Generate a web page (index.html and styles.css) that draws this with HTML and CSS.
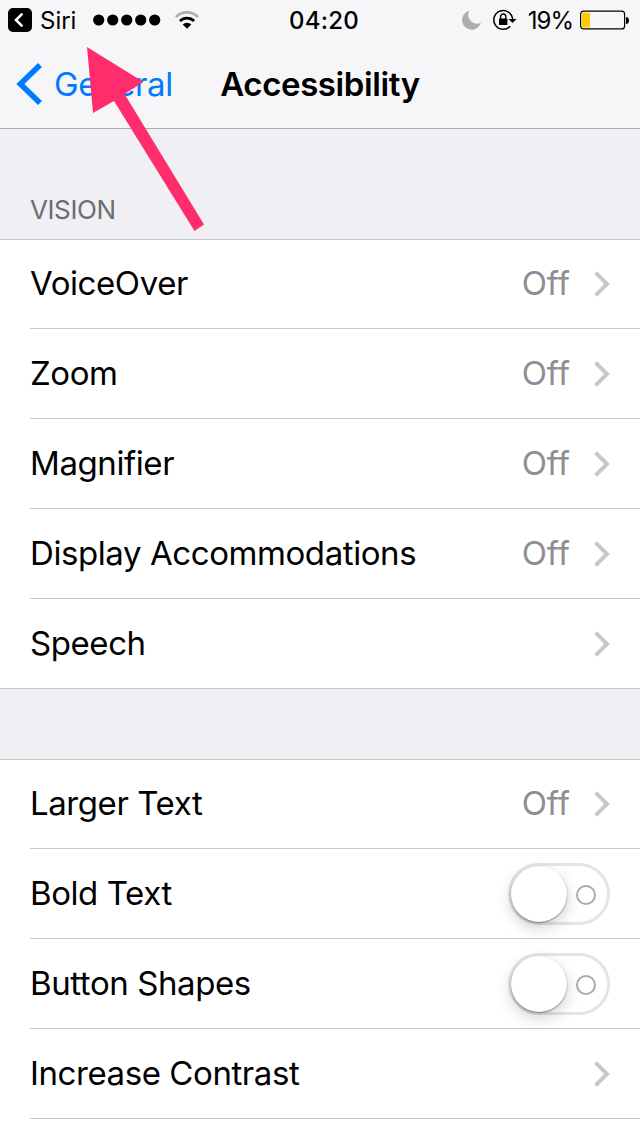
FILE: index.html
```html
<!DOCTYPE html>
<html lang="en">
<head>
    <meta charset="UTF-8">
    <meta name="viewport" content="width=device-width, initial-scale=1.0">
    <title>Accessibility</title>
    <link rel="stylesheet" href="styles.css">
</head>
<body>
    <svg width="0" height="0" class="defs">
        <symbol id="chevron" viewBox="0 0 16 26">
            <path d="M1.6 1.6 L13 13 L1.6 24.4" fill="none" stroke="#c7c7cc" stroke-width="4"/>
        </symbol>
    </svg>

    <header class="header">
        <div class="status-bar">
            <div class="status-left">
                <svg class="app-back" width="24" height="24" viewBox="0 0 24 24">
                    <rect width="24" height="24" rx="5"/>
                    <path d="M14.4 5.6 L8 12 L14.4 18.4" fill="none" stroke="#fff" stroke-width="2.6"/>
                </svg>
                <span class="app-name">Siri</span>
                <svg class="signal" width="68" height="12" viewBox="0 0 68 12">
                    <circle cx="5.7" cy="6" r="5.6"/>
                    <circle cx="19.7" cy="6" r="5.6"/>
                    <circle cx="33.7" cy="6" r="5.6"/>
                    <circle cx="47.7" cy="6" r="5.6"/>
                    <circle cx="61.7" cy="6" r="5.6"/>
                </svg>
                <svg class="wifi" width="24" height="18" viewBox="0 0 24 18">
                    <path d="M0.9 6.1 A15.6 15.6 0 0 1 23.1 6.1" fill="none" stroke="#b0b0b2" stroke-width="2.8"/>
                    <path d="M4.9 10.1 A10 10 0 0 1 19.1 10.1" fill="none" stroke="#000" stroke-width="2.8"/>
                    <path d="M12 17.8 L7.7 13.5 A6.2 6.2 0 0 1 16.3 13.5 Z"/>
                </svg>
            </div>
            <span class="time">04:20</span>
            <div class="status-right">
                <svg class="moon" width="20" height="20" viewBox="0 0 20 20">
                    <path d="M7.2 0.8 A9.6 9.6 0 1 0 18.9 12.8 A8.9 8.9 0 0 1 7.2 0.8 Z" fill="#adadb0"/>
                </svg>
                <svg class="lock" width="24" height="22" viewBox="0 0 24 22">
                    <path d="M17.2 17.2 A9.4 9.4 0 1 1 19.6 10.2" fill="none" stroke="#000" stroke-width="1.5"/>
                    <path d="M15.4 10 H23.6 L19.5 14 Z"/>
                    <rect x="6" y="9.6" width="8.4" height="6.4" rx="0.6"/>
                    <path d="M7.6 10 V7.6 A2.6 2.6 0 0 1 12.8 7.6 V10" fill="none" stroke="#000" stroke-width="1.4"/>
                </svg>
                <span class="percent">19%</span>
                <svg class="battery" width="50" height="20" viewBox="0 0 50 20">
                    <rect x="0.6" y="1.1" width="44" height="17.8" rx="3" fill="none" stroke="#000" stroke-width="1.2"/>
                    <rect x="2" y="2.8" width="8" height="14.6" rx="1" fill="#fc0"/>
                    <path d="M46 7 Q49 7.4 49 10.5 Q49 13.6 46 14 Z"/>
                </svg>
            </div>
        </div>
        <nav class="nav-bar">
            <a class="back">
                <svg width="26" height="42" viewBox="0 0 26 42">
                    <path d="M24 2 L4.4 21 L24 40" fill="none" stroke="#007aff" stroke-width="5.6"/>
                </svg>
                <span>General</span>
            </a>
            <h1 class="title">Accessibility</h1>
        </nav>
    </header>

    <main>
        <h2 class="section-title">VISION</h2>
        <ul class="list">
            <li class="row">
                <span class="label">VoiceOver</span>
                <span class="value">Off</span>
                <svg class="chevron"><use href="#chevron"/></svg>
            </li>
            <li class="row">
                <span class="label">Zoom</span>
                <span class="value">Off</span>
                <svg class="chevron"><use href="#chevron"/></svg>
            </li>
            <li class="row">
                <span class="label">Magnifier</span>
                <span class="value">Off</span>
                <svg class="chevron"><use href="#chevron"/></svg>
            </li>
            <li class="row">
                <span class="label">Display Accommodations</span>
                <span class="value">Off</span>
                <svg class="chevron"><use href="#chevron"/></svg>
            </li>
            <li class="row">
                <span class="label">Speech</span>
                <svg class="chevron"><use href="#chevron"/></svg>
            </li>
        </ul>

        <ul class="list list-open">
            <li class="row">
                <span class="label">Larger Text</span>
                <span class="value">Off</span>
                <svg class="chevron"><use href="#chevron"/></svg>
            </li>
            <li class="row">
                <span class="label">Bold Text</span>
                <div class="switch"><div class="knob"></div><div class="off-mark"></div></div>
            </li>
            <li class="row">
                <span class="label">Button Shapes</span>
                <div class="switch"><div class="knob"></div><div class="off-mark"></div></div>
            </li>
            <li class="row">
                <span class="label">Increase Contrast</span>
                <svg class="chevron"><use href="#chevron"/></svg>
            </li>
        </ul>
    </main>

    <!-- arrow pointing at the back-to-app link -->
    <svg class="arrow" width="122" height="190" viewBox="0 0 122 190">
        <path d="M3 3 L59.5 38 L40.5 50 L120 180.5 L110.5 187 L30 57 L9 69 Z" fill="#ff2d6b"/>
    </svg>
</body>
</html>
```

FILE: styles.css
```css
* {
    box-sizing: border-box;
}

body {
    margin: 0;
    height: 1136px;
    overflow: hidden;
    position: relative;
    display: flex;
    flex-direction: column;
    background-color: #efeff4;
    color: #000;
    font-family: Inter, "Liberation Sans", sans-serif;
}

main {
    flex: 1;
    display: flex;
    flex-direction: column;
}

.defs {
    display: block;
}

/* Header */
.header {
    height: 129px;
    background-color: #f6f6f8;
    border-bottom: 1px solid #a9a9ad;
}

.status-bar {
    display: grid;
    grid-template-columns: 1fr auto 1fr;
    align-items: center;
    height: 40px;
    padding: 0 10px 0 8px;
    font-size: 24px;
}

.status-left,
.status-right {
    display: flex;
    align-items: center;
}

.status-right {
    justify-content: flex-end;
}

.app-name {
    margin-left: 8px;
    width: 37px;
}

.signal {
    margin-left: 16px;
}

.wifi {
    margin-left: 14px;
}

.time {
    margin-left: 10px;
    font-weight: 500;
    letter-spacing: 0.2px;
}

.lock {
    margin-left: 11px;
}

.percent {
    margin-left: 11px;
    letter-spacing: -1px;
}

.battery {
    margin-left: 7px;
}

.nav-bar {
    display: grid;
    grid-template-columns: 1fr auto 1fr;
    align-items: center;
    height: 88px;
    padding: 0 16px;
}

.back {
    display: flex;
    align-items: center;
    gap: 12px;
    color: #007aff;
    font-size: 33px;
    letter-spacing: -0.4px;
}

.title {
    margin: 0;
    font-size: 33px;
    font-weight: 600;
    letter-spacing: -0.4px;
}

/* Lists */
.section-title {
    margin: 0;
    height: 110px;
    padding: 65px 0 0 30px;
    font-size: 26px;
    line-height: 32px;
    font-weight: 400;
    letter-spacing: -0.4px;
    color: #6d6d72;
}

.list {
    list-style: none;
    margin: 0 0 70px;
    padding: 0 0 0 30px;
    background-color: #fff;
    border-top: 1px solid #c8c7cc;
    border-bottom: 1px solid #c8c7cc;
}

.row {
    display: flex;
    align-items: center;
    height: 90px;
    padding-right: 30px;
    border-bottom: 1px solid #c8c7cc;
    font-size: 33px;
}

.row:first-child {
    height: 89px;
}

.row:last-child {
    height: 89px;
    border-bottom: none;
}

/* the list continues below the screen */
.list-open {
    flex: 1;
    margin-bottom: 0;
    border-bottom: none;
}

.list-open .row:last-child {
    height: 90px;
    border-bottom: 1px solid #c8c7cc;
}

.label {
    flex: 1;
    padding-bottom: 2px;
    letter-spacing: -0.42px;
}

.value {
    padding-bottom: 2px;
    color: #8e8e93;
}

.chevron {
    width: 16px;
    height: 26px;
    margin-left: 24px;
}

/* Switch */
.switch {
    display: flex;
    align-items: center;
    width: 102px;
    height: 62px;
    border: 3px solid #e5e5e5;
    border-radius: 31px;
}

.knob {
    width: 56px;
    height: 56px;
    border-radius: 50%;
    background-color: #fff;
    box-shadow: 0 1px 2px rgba(0, 0, 0, 0.4), 0 6px 16px rgba(0, 0, 0, 0.18);
}

.off-mark {
    width: 20px;
    height: 20px;
    margin: 2px 0 0 9px;
    border: 2px solid #aaa;
    border-radius: 50%;
}

.arrow {
    position: absolute;
    left: 84px;
    top: 44px;
}
```
